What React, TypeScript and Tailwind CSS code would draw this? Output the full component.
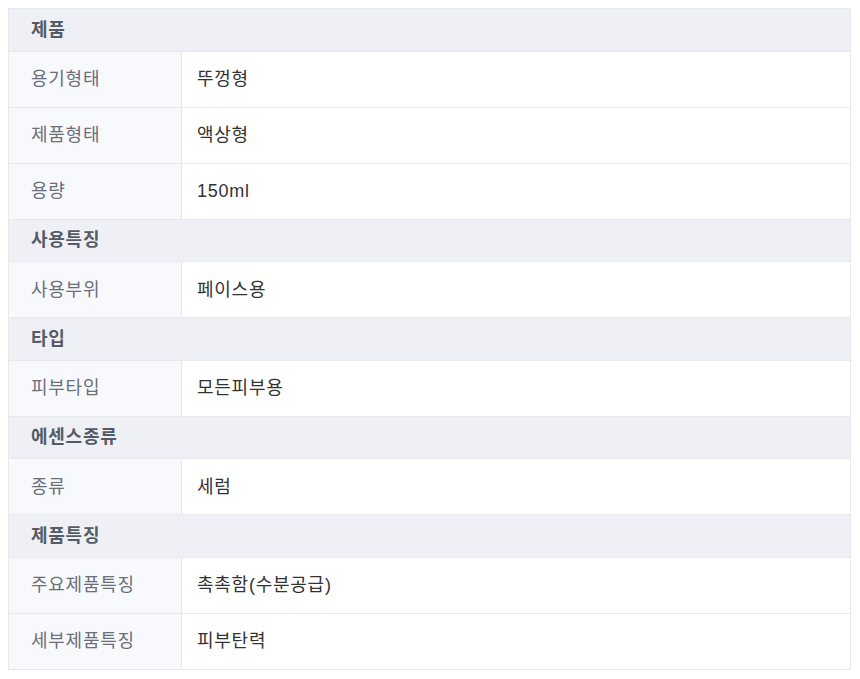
const SECTIONS: { title: string; rows: [string, string][] }[] = [
  {
    title: "제품",
    rows: [
      ["용기형태", "뚜껑형"],
      ["제품형태", "액상형"],
      ["용량", "150ml"],
    ],
  },
  { title: "사용특징", rows: [["사용부위", "페이스용"]] },
  { title: "타입", rows: [["피부타입", "모든피부용"]] },
  { title: "에센스종류", rows: [["종류", "세럼"]] },
  {
    title: "제품특징",
    rows: [
      ["주요제품특징", "촉촉함(수분공급)"],
      ["세부제품특징", "피부탄력"],
    ],
  },
];

export default function App() {
  return (
    <div className="bg-white p-2 font-['Liberation_Sans','Noto_Sans_CJK_KR',sans-serif]">
      <table className="w-[843px] border-collapse border border-[#e6e8ec] text-[18px] tracking-[0.75px]">
        <tbody>
          {SECTIONS.map((s) => (
            <>
              <tr key={s.title} className="h-[42.5px] bg-[#eef0f5]">
                <td colSpan={2} className="border border-[#e6e8ec] pl-[22px] font-semibold leading-none text-[#555b66]">
                  {s.title}
                </td>
              </tr>
              {s.rows.map(([label, value]) => (
                <tr key={label} className="h-[56px]">
                  <td className="w-[173px] border border-[#e6e8ec] bg-[#f8f9fc] pl-[22px] leading-none text-[#6b6f78]">
                    {label}
                  </td>
                  <td className="border border-[#e6e8ec] bg-white pl-[15px] leading-none text-[#333]">{value}</td>
                </tr>
              ))}
            </>
          ))}
        </tbody>
      </table>
    </div>
  );
}
